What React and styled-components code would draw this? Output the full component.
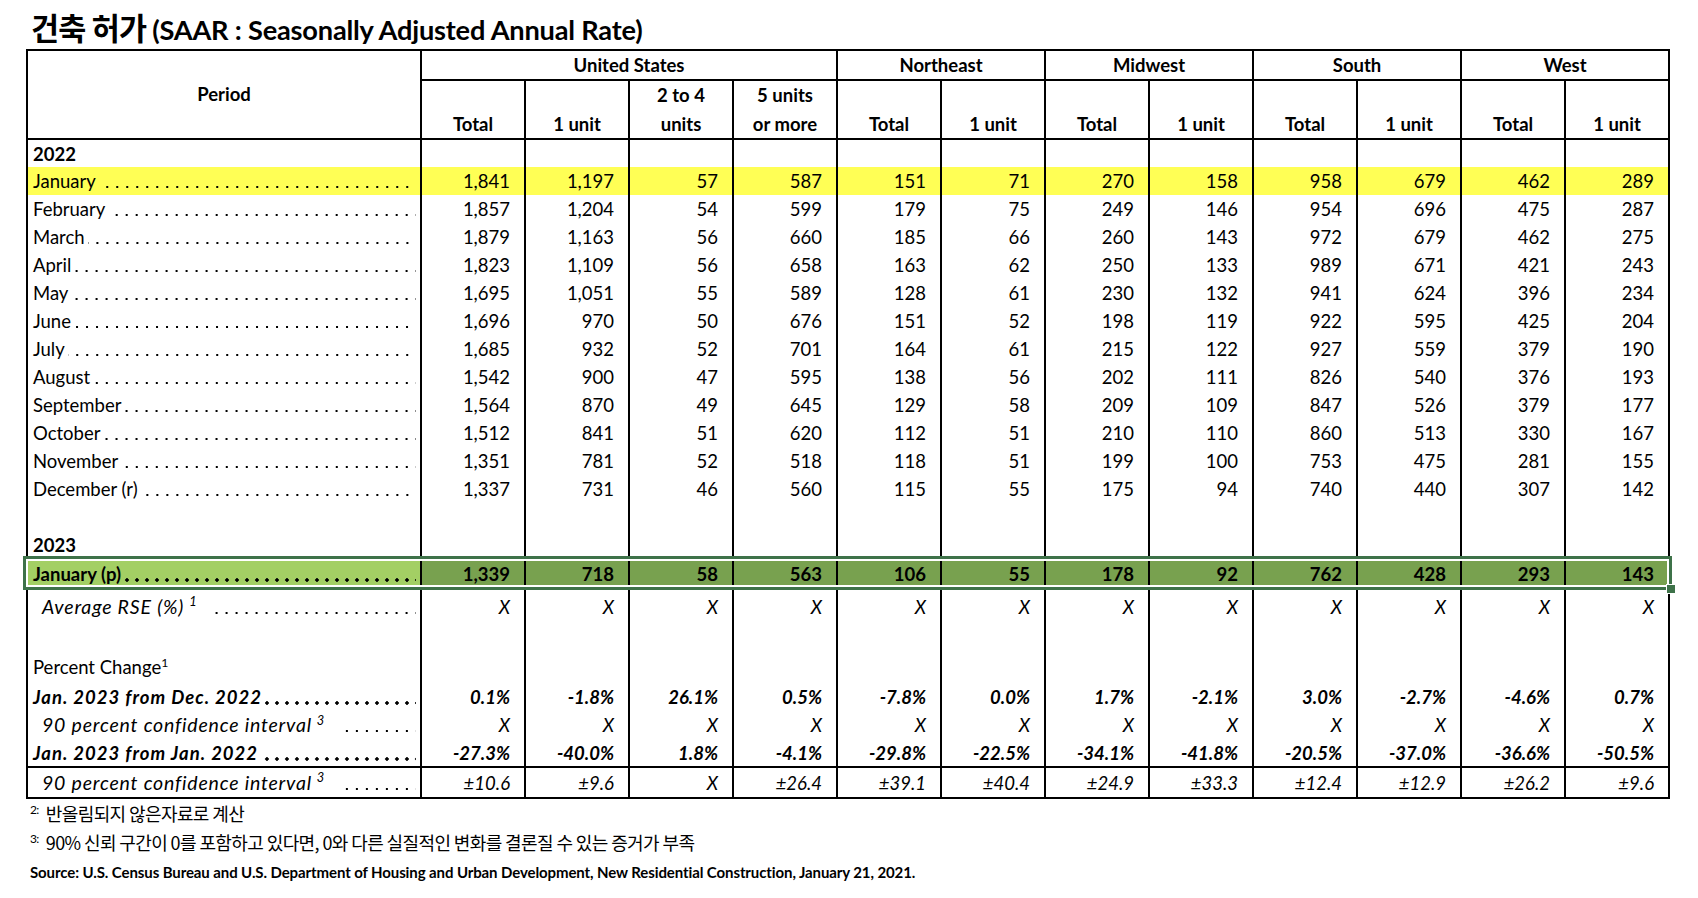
import React from "react";
import styled, { createGlobalStyle } from "styled-components";

// STYLING
const GlobalStyle = createGlobalStyle`
  body {
    margin: 0;
    background: #ffffff;
    font-family: Lato, "Noto Sans CJK KR", sans-serif;
    color: #000000;
  }
`;

const Page = styled.div`
  width: 1698px;
  height: 898px;
  overflow: hidden;
`;

const TitleBar = styled.h1`
  margin: 0;
  height: 49px;
  box-sizing: border-box;
  padding: 11px 0 0 31px;
  display: flex;
  align-items: baseline;
  gap: 6px;
  font-weight: 700;
  line-height: 32px;

  .ko {
    font-family: "Noto Sans CJK KR", sans-serif;
    font-size: 30.5px;
    letter-spacing: -0.8px;
  }

  .en {
    font-family: Lato, sans-serif;
    font-size: 27.2px;
    letter-spacing: -0.2px;
  }
`;

const TableWrap = styled.div`
  position: relative;
  margin-left: 26px;
  width: 1642px;
`;

const Grid = styled.table`
  border-collapse: collapse;
  table-layout: fixed;
  width: 1642px;
  border: 2px solid #000;
  font-size: 18.5px;
`;

const HeadCell = styled.th`
  font-weight: 700;
  text-align: center;
  vertical-align: ${(p) => p.$valign || "bottom"};
  padding: 0 4px;
  line-height: ${(p) => p.$lh || 28.5}px;
  border-left: 2px solid #000;
  border-bottom: ${(p) => (p.$under ? "2px solid #000" : "none")};
`;

const Row = styled.tr`
  height: ${(p) => p.$h}px;
  background: ${(p) => p.$bg || "transparent"};
`;

const LabelCell = styled.td`
  padding: 0 4px ${(p) => p.$pb || 0}px ${(p) => 5 + (p.$indent || 0)}px;
  vertical-align: ${(p) => p.$valign || "middle"};
  background: ${(p) => p.$bg || "transparent"};
  border-top: ${(p) => (p.$topLine ? "2px solid #000" : "none")};
  font-weight: ${(p) => (p.$bold ? 700 : 400)};
  font-style: ${(p) => (p.$italic ? "italic" : "normal")};
  font-size: ${(p) => (p.$italic && !p.$bold ? "19.5px" : "inherit")};
  letter-spacing: ${(p) => (p.$italic ? (p.$bold ? "1px" : "0.8px") : "0")};
  white-space: nowrap;
`;

const LabelLine = styled.div`
  display: flex;
  align-items: stretch;
  line-height: 26px;
`;

const Dots = styled.span`
  flex: 1;
  margin-left: ${(p) => p.$gap || 3}px;
  background-image: radial-gradient(
    circle,
    #000 ${(p) => (p.$bold ? 1.5 : 1.15)}px,
    transparent ${(p) => (p.$bold ? 1.9 : 1.55)}px
  );
  background-size: 10px 4px;
  background-position: right 4px bottom 5px;
  background-repeat: repeat-x;
`;

const Sup = styled.sup`
  font-size: 0.66em;
  line-height: 0;
  margin-left: ${(p) => p.$ml || 0}px;
`;

const NumCell = styled.td`
  text-align: right;
  padding: 0 14px 0 0;
  vertical-align: middle;
  border-left: 2px solid #000;
  border-top: ${(p) => (p.$topLine ? "2px solid #000" : "none")};
  background: ${(p) => p.$bg || "transparent"};
  font-weight: ${(p) => (p.$bold ? 700 : 400)};
  font-style: ${(p) => (p.$italic ? "italic" : "normal")};
  line-height: 26px;
`;

const Selection = styled.div`
  position: absolute;
  left: -3px;
  right: -4px;
  top: ${(p) => p.$top}px;
  height: 34px;
  box-sizing: border-box;
  border: 3px solid #3e7249;
  box-shadow: inset 0 0 0 2px #ffffff;
  pointer-events: none;
`;

const Handle = styled.div`
  position: absolute;
  right: -7px;
  bottom: -7px;
  width: 8px;
  height: 8px;
  background: #3e7249;
  border: 1px solid #ffffff;
`;

const Notes = styled.div`
  padding: 0 0 0 30px;
`;

const Note = styled.div`
  font-family: "Noto Sans CJK KR", sans-serif;
  font-size: 18px;
  height: ${(p) => p.$h}px;
  line-height: ${(p) => p.$h}px;
  letter-spacing: -0.6px;
`;

const NoteMark = styled.span`
  position: relative;
  top: -7px;
  font-family: Lato, sans-serif;
  font-size: 12px;
  line-height: 0;
  margin-right: 7px;
`;

const Source = styled.div`
  font-family: Lato, sans-serif;
  font-weight: 700;
  font-size: 15px;
  line-height: 20px;
  margin-top: 5px;
  letter-spacing: -0.1px;
`;

// DATA
const groups = [
  { name: "United States", span: 4 },
  { name: "Northeast", span: 2 },
  { name: "Midwest", span: 2 },
  { name: "South", span: 2 },
  { name: "West", span: 2 },
];

const subHeads = [
  ["Total"],
  ["1 unit"],
  ["2 to 4", "units"],
  ["5 units", "or more"],
  ["Total"],
  ["1 unit"],
  ["Total"],
  ["1 unit"],
  ["Total"],
  ["1 unit"],
  ["Total"],
  ["1 unit"],
];

const months2022 = [
  ["January", "1,841 1,197 57 587 151 71 270 158 958 679 462 289"],
  ["February", "1,857 1,204 54 599 179 75 249 146 954 696 475 287"],
  ["March", "1,879 1,163 56 660 185 66 260 143 972 679 462 275"],
  ["April", "1,823 1,109 56 658 163 62 250 133 989 671 421 243"],
  ["May", "1,695 1,051 55 589 128 61 230 132 941 624 396 234"],
  ["June", "1,696 970 50 676 151 52 198 119 922 595 425 204"],
  ["July", "1,685 932 52 701 164 61 215 122 927 559 379 190"],
  ["August", "1,542 900 47 595 138 56 202 111 826 540 376 193"],
  ["September", "1,564 870 49 645 129 58 209 109 847 526 379 177"],
  ["October", "1,512 841 51 620 112 51 210 110 860 513 330 167"],
  ["November", "1,351 781 52 518 118 51 199 100 753 475 281 155"],
  ["December (r)", "1,337 731 46 560 115 55 175 94 740 440 307 142"],
];

const jan2023 = "1,339 718 58 563 106 55 178 92 762 428 293 143".split(" ");
const xs = Array(12).fill("X");
const blanks = Array(12).fill("");
const fromDec = "0.1% -1.8% 26.1% 0.5% -7.8% 0.0% 1.7% -2.1% 3.0% -2.7% -4.6% 0.7%".split(" ");
const fromJan = "-27.3% -40.0% 1.8% -4.1% -29.8% -22.5% -34.1% -41.8% -20.5% -37.0% -36.6% -50.5%".split(" ");
const ciLast = "±10.6 ±9.6 X ±26.4 ±39.1 ±40.4 ±24.9 ±33.3 ±12.4 ±12.9 ±26.2 ±9.6".split(" ");

const Leader = ({ children, gap, bold }) => (
  <LabelLine>
    <span>{children}</span>
    <Dots $gap={gap} $bold={bold} />
  </LabelLine>
);

const Values = ({ values, ...rest }) =>
  values.map((v, i) => (
    <NumCell key={i} {...rest}>
      {v}
    </NumCell>
  ));

const App = () => {
  return (
    <Page>
      <GlobalStyle />
      <TitleBar>
        <span className="ko">건축 허가</span>
        <span className="en">(SAAR : Seasonally Adjusted Annual Rate)</span>
      </TitleBar>

      <TableWrap>
        <Grid>
          <colgroup>
            <col style={{ width: 394 }} />
            {subHeads.map((_, i) => (
              <col key={i} style={{ width: 104 }} />
            ))}
          </colgroup>
          <thead>
            <tr style={{ height: 30 }}>
              <HeadCell
                rowSpan={2}
                $valign="middle"
                $lh={27}
                style={{ borderLeft: "none", borderRight: "2px solid #000", borderBottom: "2px solid #000" }}
              >
                Period
              </HeadCell>
              {groups.map((g) => (
                <HeadCell key={g.name} colSpan={g.span} $under $valign="middle" $lh={27}>
                  {g.name}
                </HeadCell>
              ))}
            </tr>
            <tr style={{ height: 59 }}>
              {subHeads.map((lines, i) => (
                <HeadCell key={i} $under>
                  {lines.map((l) => (
                    <div key={l}>{l}</div>
                  ))}
                </HeadCell>
              ))}
            </tr>
          </thead>
          <tbody>
            <Row $h={28}>
              <LabelCell $bold>2022</LabelCell>
              <Values values={blanks} />
            </Row>
            {months2022.map(([m, vals], idx) => (
              <Row key={m} $h={28} $bg={idx === 0 ? "#ffff55" : undefined}>
                <LabelCell>
                  <Leader>{m}</Leader>
                </LabelCell>
                <Values values={vals.split(" ")} />
              </Row>
            ))}
            <Row $h={28}>
              <LabelCell />
              <Values values={blanks} />
            </Row>
            <Row $h={28}>
              <LabelCell $bold>2023</LabelCell>
              <Values values={blanks} />
            </Row>
            <Row $h={29}>
              <LabelCell $bold $bg="#a3cf64">
                <Leader bold>January (p)</Leader>
              </LabelCell>
              <Values values={jan2023} $bold $bg="#78a14f" />
            </Row>
            <Row $h={37}>
              <LabelCell $italic $indent={9}>
                <Leader gap={18}>
                  Average RSE (%)<Sup $ml={5}>1</Sup>
                </Leader>
              </LabelCell>
              <Values values={xs} $italic />
            </Row>
            <Row $h={57}>
              <LabelCell $valign="bottom" $pb={2}>
                <LabelLine>
                  <span>
                    Percent Change<Sup>1</Sup>
                  </span>
                </LabelLine>
              </LabelCell>
              <Values values={blanks} />
            </Row>
            <Row $h={29}>
              <LabelCell $bold $italic>
                <Leader bold>Jan. 2023 from Dec. 2022</Leader>
              </LabelCell>
              <Values values={fromDec} $bold $italic />
            </Row>
            <Row $h={28}>
              <LabelCell $italic $indent={9}>
                <Leader gap={18}>
                  90 percent confidence interval<Sup $ml={5}>3</Sup>
                </Leader>
              </LabelCell>
              <Values values={xs} $italic />
            </Row>
            <Row $h={28}>
              <LabelCell $bold $italic>
                <Leader bold>Jan. 2023 from Jan. 2022</Leader>
              </LabelCell>
              <Values values={fromJan} $bold $italic />
            </Row>
            <Row $h={31}>
              <LabelCell $italic $indent={9} $topLine>
                <Leader gap={18}>
                  90 percent confidence interval<Sup $ml={5}>3</Sup>
                </Leader>
              </LabelCell>
              <Values values={ciLast} $italic $topLine />
            </Row>
          </tbody>
        </Grid>
        <Selection $top={507}>
          <Handle />
        </Selection>
      </TableWrap>

      <Notes>
        <Note $h={28}>
          <NoteMark>2:</NoteMark>반올림되지 않은자료로 계산
        </Note>
        <Note $h={30}>
          <NoteMark>3:</NoteMark>90% 신뢰 구간이 0를 포함하고 있다면, 0와 다른 실질적인 변화를 결론질 수 있는 증거가 부족
        </Note>
        <Source>
          Source: U.S. Census Bureau and U.S. Department of Housing and Urban Development, New Residential Construction,
          January 21, 2021.
        </Source>
      </Notes>
    </Page>
  );
};

export default App;
